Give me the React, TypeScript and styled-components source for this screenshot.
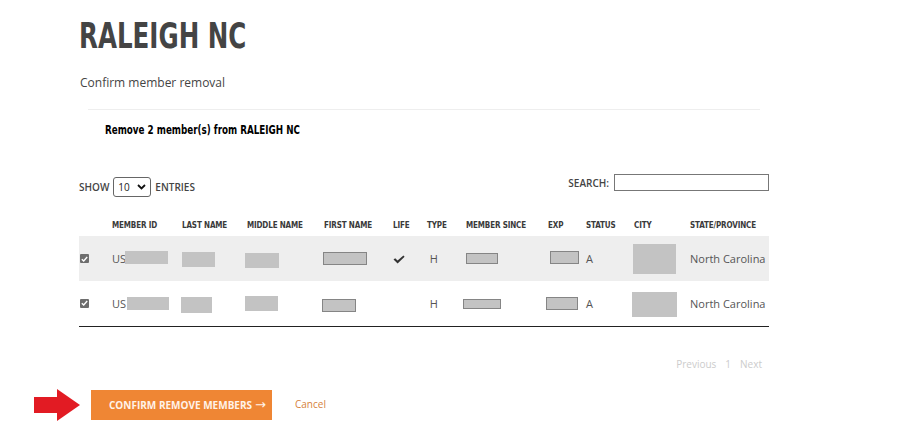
import React from "react";
import styled, { createGlobalStyle } from "styled-components";

const Global = createGlobalStyle`
  html, body { margin: 0; padding: 0; background: #fff; }
  body { font-family: "Open Sans", "Liberation Sans", sans-serif; color: #444; }
  * { box-sizing: border-box; }
`;

const Page = styled.div`
  width: 900px;
  height: 431px;
  padding: 14px 0 0 79px;
  overflow: hidden;
`;

const Title = styled.h1`
  margin: 0;
  height: 44px;
  font-family: "DejaVu Sans Condensed", "DejaVu Sans", sans-serif;
  font-stretch: condensed;
  font-weight: 700;
  font-size: 35px;
  line-height: 44px;
  color: #444;
`;

const Squeeze = styled.span<{ $k: number }>`
  display: inline-block;
  transform: scaleX(${(p) => p.$k});
  transform-origin: left center;
  white-space: nowrap;
`;

const Subtitle = styled.p`
  margin: 17px 0 0 1px;
  font-size: 12px;
  line-height: 16px;
  color: #444;
`;

const Rule = styled.hr`
  margin: 18px 0 0 9px;
  width: 672px;
  border: 0;
  border-top: 1px solid #eeeeee;
`;

const Notice = styled.div`
  margin: 12px 0 0 26px;
  font-family: "DejaVu Sans Condensed", "DejaVu Sans", sans-serif;
  font-stretch: condensed;
  font-weight: 700;
  font-size: 12.5px;
  line-height: 16px;
  color: #000;
`;

const Controls = styled.div`
  margin-top: 37px;
  width: 690px;
  display: flex;
  justify-content: space-between;
  align-items: flex-start;
`;

const LenLabel = styled.label`
  display: flex;
  align-items: center;
  gap: 4px;
  font-size: 10px;
  font-weight: 600;
  color: #444;
  margin-top: 2px;
`;

const Select = styled.span`
  display: inline-flex;
  align-items: center;
  justify-content: space-between;
  width: 38px;
  height: 20px;
  padding: 0 4px 0 4px;
  border: 1px solid #666;
  border-radius: 3px;
  font-size: 10px;
  font-weight: 400;
  color: #222;
`;

const SearchLabel = styled.label`
  display: flex;
  align-items: center;
  gap: 5px;
  margin-top: -1px;
  font-size: 10px;
  font-weight: 600;
  color: #444;
`;

const SearchBox = styled.span`
  display: inline-block;
  width: 155px;
  height: 17px;
  border: 1px solid #777;
`;

const Table = styled.table`
  margin-top: 18px;
  width: 690px;
  border-collapse: collapse;
  table-layout: fixed;
  border-bottom: 1px solid #222;
`;

const Th = styled.th<{ $w: number }>`
  width: ${(p) => p.$w}px;
  padding: 0 0 6px 0;
  text-align: left;
  font-family: "DejaVu Sans Condensed", "DejaVu Sans", sans-serif;
  font-stretch: condensed;
  font-weight: 900;
  font-size: 8px;
  letter-spacing: -0.15px;
  color: #3a3a3a;
  height: 21px;
  vertical-align: bottom;
  white-space: nowrap;
`;

const Tr = styled.tr<{ $shade: boolean }>`
  background: ${(p) => (p.$shade ? "#eeeeee" : "#fff")};
  height: 45px;
`;

const Td = styled.td`
  padding: 0;
  font-size: 11px;
  color: #555;
  vertical-align: middle;
  white-space: nowrap;
`;

const Cell = styled.div`
  display: flex;
  align-items: center;
`;

const Redact = styled.span<{ $w: number; $h: number; $x: number; $y: number; $b?: boolean }>`
  display: inline-block;
  width: ${(p) => p.$w}px;
  height: ${(p) => p.$h}px;
  margin-left: ${(p) => p.$x}px;
  position: relative;
  top: ${(p) => p.$y}px;
  background: #c3c3c3;
  border: ${(p) => (p.$b ? "1px solid #858585" : "none")};
`;

const Check = styled.span`
  display: inline-flex;
  align-items: center;
  justify-content: center;
  width: 9px;
  height: 9px;
  margin-left: 1px;
  background: #6e6e6e;
  border-radius: 1px;
`;

const Pager = styled.div`
  width: 690px;
  margin-top: 30px;
  display: flex;
  justify-content: flex-end;
  gap: 9px;
  padding-right: 7px;
  font-size: 10px;
  color: #cccccc;
`;

const Actions = styled.div`
  margin: 18px 0 0 -45px;
  display: flex;
  align-items: center;
`;

const Button = styled.button`
  margin-left: 11px;
  width: 181px;
  height: 30px;
  border: 0;
  background: #ef8634;
  color: #fff2e8;
  font-family: "Open Sans", sans-serif;
  font-weight: 700;
  font-size: 10px;
  letter-spacing: 0;
  text-align: left;
  padding: 0 0 0 18px;
  white-space: nowrap;
  display: flex;
  align-items: center;
  gap: 3px;
`;

const Arrow = styled.span`
  font-family: "DejaVu Sans", sans-serif;
  font-weight: 400;
  font-size: 13px;
  margin-top: -1px;
`;

const Cancel = styled.a`
  margin-left: 23px;
  font-size: 10px;
  color: #d67f3c;
  margin-top: -2px;
`;

const cols = [
  { label: "", w: 33 },
  { label: "MEMBER ID", w: 70 },
  { label: "LAST NAME", w: 65 },
  { label: "MIDDLE NAME", w: 77 },
  { label: "FIRST NAME", w: 69 },
  { label: "LIFE", w: 34 },
  { label: "TYPE", w: 39 },
  { label: "MEMBER SINCE", w: 82 },
  { label: "EXP", w: 38 },
  { label: "STATUS", w: 48 },
  { label: "CITY", w: 56 },
  { label: "STATE/PROVINCE", w: 79 },
];

type Box = { w: number; h: number; x: number; y: number; b?: boolean };
type Row = {
  id: Box; last: Box; middle: Box; first: Box; life: boolean;
  since: Box; exp: Box; city: Box;
};

const rows: Row[] = [
  {
    id: { w: 43, h: 13, x: -1, y: -1 },
    last: { w: 33, h: 15, x: 0, y: 1 },
    middle: { w: 34, h: 15, x: -2, y: 2 },
    first: { w: 44, h: 13, x: -1, y: 0, b: true },
    life: true,
    since: { w: 32, h: 11, x: 0, y: 0, b: true },
    exp: { w: 29, h: 13, x: 2, y: -1, b: true },
    city: { w: 43, h: 30, x: -1, y: 0 },
  },
  {
    id: { w: 42, h: 13, x: 1, y: 0 },
    last: { w: 31, h: 16, x: -1, y: 2 },
    middle: { w: 33, h: 15, x: -2, y: 0 },
    first: { w: 34, h: 13, x: -2, y: 2, b: true },
    life: false,
    since: { w: 38, h: 10, x: -3, y: 1, b: true },
    exp: { w: 32, h: 13, x: -2, y: 0, b: true },
    city: { w: 45, h: 25, x: -2, y: 1 },
  },
];

const Tick = () => (
  <svg width="7" height="6" viewBox="0 0 7 6">
    <path d="M0.8 3.2 L2.7 5 L6.2 1" fill="none" stroke="#fff" strokeWidth="1.4" />
  </svg>
);

const LifeTick = () => (
  <svg width="12" height="9" viewBox="0 0 12 9" style={{ marginTop: 1 }}>
    <path d="M0.5 4.6 L2.2 3.2 L4.6 5.4 L10.4 0.5 L11.6 1.8 L4.6 8.4 Z" fill="#333" />
  </svg>
);

const Chevron = () => (
  <svg width="9" height="6" viewBox="0 0 9 6">
    <path d="M1 1 L4.5 4.5 L8 1" fill="none" stroke="#111" strokeWidth="1.8" />
  </svg>
);

const RedArrow = () => (
  <svg width="46" height="32" viewBox="0 0 46 32">
    <path d="M0 8 H23 V0 L46 16 L23 32 V24 H0 Z" fill="#e21b23" />
  </svg>
);

const R = ({ b }: { b: Box }) => <Redact $w={b.w} $h={b.h} $x={b.x} $y={b.y} $b={b.b} />;

export default function App() {
  return (
    <>
      <Global />
      <Page>
        <Title>
          <Squeeze $k={0.78}>RALEIGH NC</Squeeze>
        </Title>
        <Subtitle>Confirm member removal</Subtitle>
        <Rule />
        <Notice>
          <Squeeze $k={0.78}>Remove 2 member(s) from RALEIGH NC</Squeeze>
        </Notice>
        <Controls>
          <LenLabel>
            SHOW
            <Select>
              10 <Chevron />
            </Select>
            ENTRIES
          </LenLabel>
          <SearchLabel>
            SEARCH:
            <SearchBox />
          </SearchLabel>
        </Controls>
        <Table>
          <thead>
            <tr>
              {cols.map((c, i) => (
                <Th key={i} $w={c.w}>
                  {c.label}
                </Th>
              ))}
            </tr>
          </thead>
          <tbody>
            {rows.map((r, i) => (
              <Tr key={i} $shade={i === 0}>
                <Td>
                  <Cell>
                    <Check>
                      <Tick />
                    </Check>
                  </Cell>
                </Td>
                <Td>
                  <Cell>
                    US
                    <R b={r.id} />
                  </Cell>
                </Td>
                <Td>
                  <Cell>
                    <R b={r.last} />
                  </Cell>
                </Td>
                <Td>
                  <Cell>
                    <R b={r.middle} />
                  </Cell>
                </Td>
                <Td>
                  <Cell>
                    <R b={r.first} />
                  </Cell>
                </Td>
                <Td>
                  <Cell>{r.life ? <LifeTick /> : null}</Cell>
                </Td>
                <Td>
                  <Cell>&nbsp;H</Cell>
                </Td>
                <Td>
                  <Cell>
                    <R b={r.since} />
                  </Cell>
                </Td>
                <Td>
                  <Cell>
                    <R b={r.exp} />
                  </Cell>
                </Td>
                <Td>
                  <Cell>A</Cell>
                </Td>
                <Td>
                  <Cell>
                    <R b={r.city} />
                  </Cell>
                </Td>
                <Td>
                  <Cell>North Carolina</Cell>
                </Td>
              </Tr>
            ))}
          </tbody>
        </Table>
        <Pager>
          <span>Previous</span>
          <span>1</span>
          <span>Next</span>
        </Pager>
        <Actions>
          <RedArrow />
          <Button>
            CONFIRM REMOVE MEMBERS<Arrow>→</Arrow>
          </Button>
          <Cancel>Cancel</Cancel>
        </Actions>
      </Page>
    </>
  );
}
